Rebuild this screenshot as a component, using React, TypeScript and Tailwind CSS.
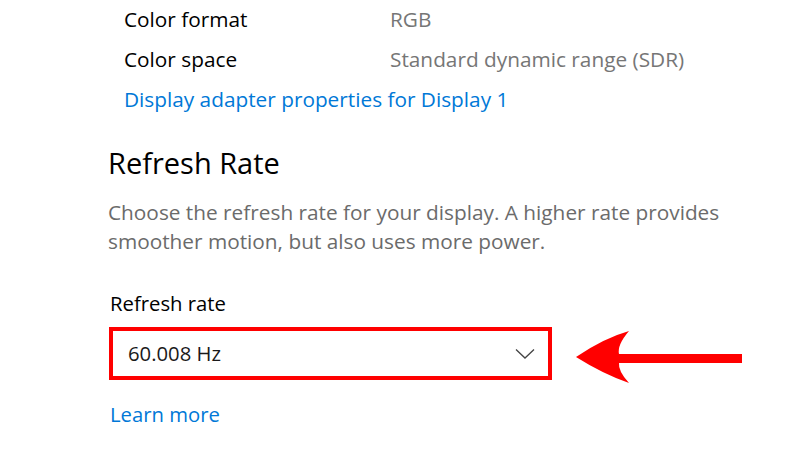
const InfoRow = ({ label, value }: { label: string; value: string }) => (
  <div className="flex h-[40px] items-center">
    <span className="w-[266px] text-[#000000]">{label}</span>
    <span className="text-[#767676]">{value}</span>
  </div>
)

const App = () => {
  return (
    <div
      className="relative h-[460px] w-[800px] overflow-hidden bg-white text-[20.8px]"
      style={{ fontFamily: '"Open Sans", "Noto Sans", sans-serif' }}
    >
      <div className="pl-[124px]">
        <InfoRow label="Color format" value="RGB" />
        <InfoRow label="Color space" value="Standard dynamic range (SDR)" />
        <div className="flex h-[39px] items-center text-[#0078d7]">Display adapter properties for Display 1</div>
      </div>

      <div className="pl-[108px]">
        <h2 className="mt-[24px] flex h-[40px] items-center text-[29px] text-black">Refresh Rate</h2>
        <p className="mt-[15px] w-[660px] leading-[29px] text-[#6b6b6b]">
          Choose the refresh rate for your display. A higher rate provides smoother motion, but also uses more power.
        </p>
      </div>

      <div className="pl-[110px] text-[20.3px]">
        <div className="mt-[32px] flex h-[30px] items-center text-black">Refresh rate</div>
        <div className="-ml-[1px] mt-[9px] flex h-[53px] w-[443px] items-center justify-between border-4 border-[#ff0000] pl-[15px] pr-[13px] text-[#1a1a1a]">
          <span>60.008 Hz</span>
          <svg width="20" height="11" viewBox="0 0 20 11" fill="none">
            <path d="M1 1.5 L10 10 L19 1.5" stroke="#444" strokeWidth="1.3" />
          </svg>
        </div>
        <div className="mt-[19px] flex h-[30px] items-center text-[#0078d7]">Learn more</div>
      </div>

      <svg className="absolute left-[560px] top-[320px]" width="200" height="80" viewBox="560 320 200 80">
        <path
          d="M576 357 Q604 338 629 331 Q617 345 619 354 L742 354 L742 363 L619 363 Q618 371 629 383 Q603 374 576 357 Z"
          fill="#ff0000"
        />
      </svg>
    </div>
  )
}

export default App
